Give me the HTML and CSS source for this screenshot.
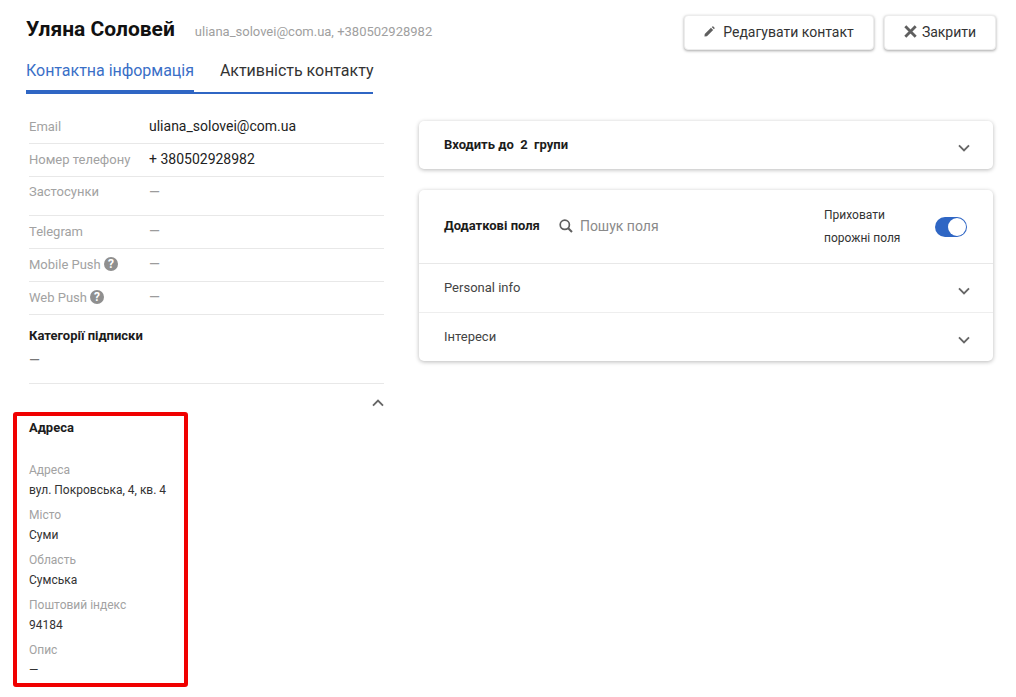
FILE: index.html
```html
<!DOCTYPE html>
<html lang="uk">
<head>
<meta charset="utf-8">
<title>Контакт</title>
<link rel="stylesheet" href="styles.css">
</head>
<body>
<div class="page">
  <header class="top">
    <div class="top-left">
      <div class="title-row">
        <h1 class="name">Уляна Соловей</h1>
        <span class="sub">uliana_solovei@com.ua, +380502928982</span>
      </div>
      <nav class="tabs">
        <span class="tab active">Контактна інформація</span>
        <span class="tab">Активність контакту</span>
      </nav>
    </div>
    <div class="actions">
      <button class="btn btn-edit">
        <svg class="ico-pen" viewBox="0 0 12 12"><path d="M0.5 11.5 L0.8 8.8 L7.6 2 L10 4.4 L3.2 11.2 Z M8.4 1.2 L9.2 0.5 Q9.7 0.1 10.2 0.5 L11.5 1.8 Q11.9 2.3 11.5 2.8 L10.8 3.6 Z" fill="#5f5f5f"/></svg>
        Редагувати контакт
      </button>
      <button class="btn btn-close">
        <svg class="ico-x" viewBox="0 0 12 12"><path d="M1.2 1.2 L10.8 10.8 M10.8 1.2 L1.2 10.8" stroke="#5f5f5f" stroke-width="2.6" fill="none"/></svg>
        Закрити
      </button>
    </div>
  </header>

  <main class="main">
    <section class="left">
      <div class="row"><span class="label">Email</span><span class="value">uliana_solovei@com.ua</span></div>
      <div class="row"><span class="label">Номер телефону</span><span class="value">+ 380502928982</span></div>
      <div class="row row-tall"><span class="label">Застосунки</span><span class="value dash">—</span></div>
      <div class="row"><span class="label">Telegram</span><span class="value dash">—</span></div>
      <div class="row"><span class="label">Mobile Push <svg class="q" viewBox="0 0 14 14"><circle cx="7" cy="7" r="7" fill="#8f8f8f"/><text x="7" y="11.2" class="q-mark">?</text></svg></span><span class="value dash">—</span></div>
      <div class="row"><span class="label">Web Push <svg class="q" viewBox="0 0 14 14"><circle cx="7" cy="7" r="7" fill="#8f8f8f"/><text x="7" y="11.2" class="q-mark">?</text></svg></span><span class="value dash">—</span></div>
      <div class="subs">
        <div class="strong">Категорії підписки</div>
        <div class="subs-dash">—</div>
      </div>
      <div class="collapse"><svg class="chev" viewBox="0 0 12 8"><path d="M1 6.6 L6 1.6 L11 6.6" fill="none" stroke="#666" stroke-width="1.9"/></svg></div>
      <div class="address">
        <div class="strong addr-title">Адреса</div>
        <div class="field"><div class="f-label">Адреса</div><div class="f-value">вул. Покровська, 4, кв. 4</div></div>
        <div class="field"><div class="f-label">Місто</div><div class="f-value">Суми</div></div>
        <div class="field"><div class="f-label">Область</div><div class="f-value">Сумська</div></div>
        <div class="field"><div class="f-label">Поштовий індекс</div><div class="f-value">94184</div></div>
        <div class="field"><div class="f-label">Опис</div><div class="f-value">—</div></div>
      </div>
    </section>

    <section class="right">
      <div class="card group-card">
        <span class="strong">Входить до&nbsp; 2&nbsp; групи</span>
        <svg class="chev" viewBox="0 0 12 8"><path d="M1 1.4 L6 6.4 L11 1.4" fill="none" stroke="#666" stroke-width="1.9"/></svg>
      </div>
      <div class="card fields-card">
        <div class="fields-head">
          <span class="strong">Додаткові поля</span>
          <span class="search">
            <svg class="ico-search" viewBox="0 0 14 14"><circle cx="5.8" cy="5.8" r="4.6" fill="none" stroke="#5f5f5f" stroke-width="1.7"/><path d="M9.2 9.2 L13 13" stroke="#5f5f5f" stroke-width="2"/></svg>
            <span class="placeholder">Пошук поля</span>
          </span>
          <span class="hide-label">Приховати<br>порожні поля</span>
          <span class="toggle"><span class="knob"></span></span>
        </div>
        <div class="acc"><span class="acc-title">Personal info</span><svg class="chev" viewBox="0 0 12 8"><path d="M1 1.4 L6 6.4 L11 1.4" fill="none" stroke="#666" stroke-width="1.9"/></svg></div>
        <div class="acc"><span class="acc-title">Інтереси</span><svg class="chev" viewBox="0 0 12 8"><path d="M1 1.4 L6 6.4 L11 1.4" fill="none" stroke="#666" stroke-width="1.9"/></svg></div>
      </div>
    </section>
  </main>
</div>
</body>
</html>
```

FILE: styles.css
```css
* { box-sizing: border-box; }
html, body { margin: 0; height: 100%; background: #fff; overflow: hidden; }
body { font-family: Roboto, "Liberation Sans", sans-serif; color: #212121; }
.page { width: 1016px; height: 697px; padding: 0 20px 0 26px; }

.top { display: flex; justify-content: space-between; align-items: flex-start; }
.top-left { padding-top: 17px; }
.title-row { display: flex; align-items: center; height: 24px; }
.name { margin: 0; font-size: 21px; line-height: 24px; font-weight: 700; color: #111; }
.sub { margin-left: 20px; font-size: 13px; color: #a0a0a0; position: relative; top: 2px; }
.tabs { display: flex; margin-top: 18px; height: 35px; border-bottom: 2px solid #2f66c4; width: 347px; }
.tab { font-size: 16px; line-height: 24px; color: #333; white-space: nowrap; letter-spacing: -0.03px; }
.tab.active { color: #3a6fc7; width: 168px; height: 35px; border-bottom: 4px solid #2f66c4; margin-right: 26px; }

.actions { display: flex; gap: 10px; padding-top: 15px; }
.btn { height: 35px; border: 1px solid #ececec; border-radius: 4px; background: #fff; box-shadow: 0 1px 3px rgba(0,0,0,.35); font: 400 14px Roboto, sans-serif; color: #333; display: flex; align-items: center; justify-content: center; padding: 0 0 2px; }
.btn-edit { width: 190px; gap: 8px; }
.btn-close { width: 112px; gap: 5px; }
.ico-pen { width: 11px; height: 11px; }
.ico-x { width: 13px; height: 13px; }

.main { display: flex; align-items: flex-start; margin-top: 17px; }
.left { width: 355px; margin-left: 3px; }
.right { width: 574px; margin-left: 35px; padding-top: 10px; display: flex; flex-direction: column; gap: 21px; }

.row { display: grid; grid-template-columns: 120px 1fr; height: 33px; align-items: center; padding-bottom: 2px; border-bottom: 1px solid #e8e8e8; }
.row-tall { height: 39px; align-items: start; padding: 7px 0 0; }
.label { font-size: 13px; color: #a2a2a2; display: flex; align-items: center; gap: 3px; white-space: nowrap; }
.value { font-size: 14px; color: #222; }
.dash { color: #9c9c9c; }
.q { width: 14px; height: 14px; }
.q-mark { font: 700 12px Roboto, sans-serif; fill: #fff; text-anchor: middle; }

.strong { font-size: 13px; font-weight: 700; color: #1c1c1c; }
.subs { height: 69px; padding-top: 13px; border-bottom: 1px solid #e8e8e8; }
.subs .strong { line-height: 15px; }
.subs-dash { font-size: 14px; color: #777; margin-top: 9px; line-height: 16px; }
.collapse { display: flex; justify-content: flex-end; height: 28px; padding-top: 15px; }

.address { width: 175px; height: 275px; margin-left: -16px; border: 4px solid #f00000; border-radius: 3px; padding: 4px 0 0 12px; }
.addr-title { line-height: 16px; margin-bottom: 24px; }
.field { height: 45px; }
.f-label { font-size: 12px; line-height: 20px; color: #a2a2a2; }
.f-value { font-size: 12px; line-height: 20px; color: #333; }

.card { background: #fff; border-radius: 5px; box-shadow: 0 1px 4px rgba(0,0,0,.28); }
.group-card { height: 48px; display: flex; align-items: center; justify-content: space-between; padding: 0 23px 0 25px; }
.group-card .strong { margin-top: -2px; }
.chev { width: 12px; height: 8px; display: block; }
.group-card .chev { margin-top: 6px; }

.fields-head { display: flex; align-items: center; height: 74px; padding: 0 26px 0 25px; border-bottom: 1px solid #e8e8e8; }
.fields-head .strong { margin-top: -2px; }
.search { display: flex; align-items: center; gap: 7px; margin-left: 19px; flex: 1; margin-top: -2px; }
.ico-search { width: 14px; height: 14px; }
.placeholder { font-size: 14px; color: #8a8a8a; }
.hide-label { font-size: 12px; line-height: 23px; color: #333; width: 111px; }
.toggle { width: 32px; height: 20px; border-radius: 10px; background: #2f66c4; position: relative; display: block; }
.knob { position: absolute; right: 1px; top: 1px; width: 18px; height: 18px; border-radius: 50%; background: #fff; }

.acc { height: 49px; display: flex; align-items: center; justify-content: space-between; padding: 0 23px 0 25px; border-bottom: 1px solid #eee; }
.acc:last-child { border-bottom: 0; height: 48px; }
.acc-title { font-size: 13px; color: #444; margin-top: -2px; }
.acc .chev { margin-top: 6px; }
```
